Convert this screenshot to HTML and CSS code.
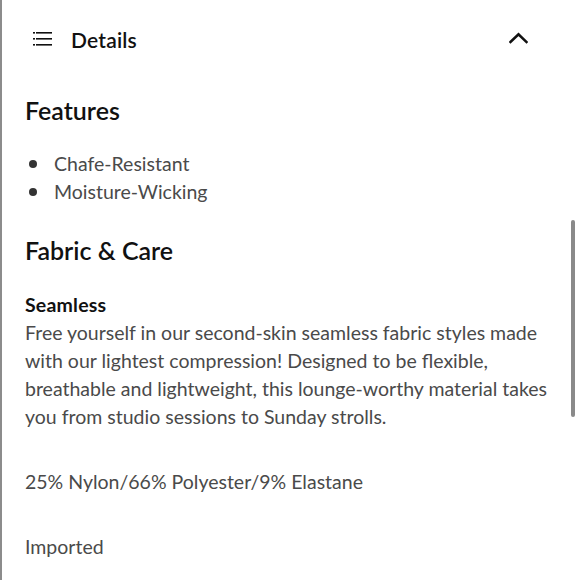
FILE: index.html
```html
<!DOCTYPE html>
<html>
<head>
<meta charset="utf-8">
<link rel="stylesheet" href="styles.css">
</head>
<body>
<div class="panel">
  <div class="header">
    <div class="title-group">
      <svg class="list-icon" width="19" height="14" viewBox="0 0 19 14">
        <rect x="0" y="0" width="2" height="1.6" fill="#111"/>
        <rect x="3" y="0" width="16" height="1.6" fill="#111"/>
        <rect x="0" y="6" width="2" height="1.6" fill="#111"/>
        <rect x="3" y="6" width="16" height="1.6" fill="#111"/>
        <rect x="0" y="12" width="2" height="1.6" fill="#111"/>
        <rect x="3" y="12" width="16" height="1.6" fill="#111"/>
      </svg>
      <span class="title">Details</span>
    </div>
    <svg class="chevron" width="19" height="12" viewBox="0 0 19 12">
      <polyline points="1.5,10 9.5,2.2 17.5,10" fill="none" stroke="#111" stroke-width="2.6" stroke-linecap="square"/>
    </svg>
  </div>
  <div class="content">
    <h2 class="section-title features-title">Features</h2>
    <ul class="features">
      <li>Chafe-Resistant</li>
      <li>Moisture-Wicking</li>
    </ul>
    <h2 class="section-title fabric-title">Fabric &amp; Care</h2>
    <p class="desc"><strong class="sub">Seamless</strong><br>Free yourself in our second-skin seamless fabric styles made with our lightest compression! Designed to be flexible, breathable and lightweight, this lounge-worthy material takes you from studio sessions to Sunday strolls.</p>
    <p class="note">25% Nylon/66% Polyester/9% Elastane</p>
    <p class="note">Imported</p>
  </div>
  <div class="scrollbar"></div>
</div>
</body>
</html>
```
FILE: styles.css
```css
html, body {
  margin: 0;
  padding: 0;
  background: #fff;
}
body {
  font-family: Lato, "Open Sans", sans-serif;
  width: 580px;
  height: 580px;
  overflow: hidden;
}
.panel {
  position: relative;
  height: 580px;
  border-left: 2px solid #8c8c8c;
  box-sizing: border-box;
}
.header {
  height: 78px;
  display: flex;
  align-items: center;
  justify-content: space-between;
  padding: 0 52px 0 31px;
}
.title-group {
  display: flex;
  align-items: center;
  gap: 19px;
}
.list-icon {
  display: block;
  margin-top: 0;
}
.title {
  font-size: 21px;
  font-weight: 600;
  color: #111;
  line-height: 1;
  letter-spacing: 0.2px;
}
.chevron {
  display: block;
  margin-top: -2px;
}
.content {
  padding: 17px 0 0 23px;
  color: #4a4a4a;
  font-size: 19.5px;
}
.section-title {
  margin: 0;
  font-size: 25px;
  line-height: 30px;
  font-weight: 600;
  color: #111;
}
.features {
  list-style: none;
  margin: 25px 0 29px;
  padding: 0;
  line-height: 28px;
}
.features li {
  display: flex;
  align-items: center;
  gap: 17px;
}
.features li::before {
  content: "";
  width: 8px;
  height: 8px;
  border-radius: 50%;
  background: #333;
  margin-left: 4px;
}
.desc {
  margin: 26px 0 0;
  line-height: 28px;
  padding-right: 14px;
}
.sub {
  font-size: 19.5px;
  font-weight: 700;
  color: #111;
  letter-spacing: 0.2px;
}
.note {
  margin: 37px 0 0;
  line-height: 28px;
}
.scrollbar {
  position: absolute;
  left: 569px;
  top: 220px;
  width: 4px;
  height: 197px;
  border-radius: 2px;
  background: #8a8a8a;
}
```
